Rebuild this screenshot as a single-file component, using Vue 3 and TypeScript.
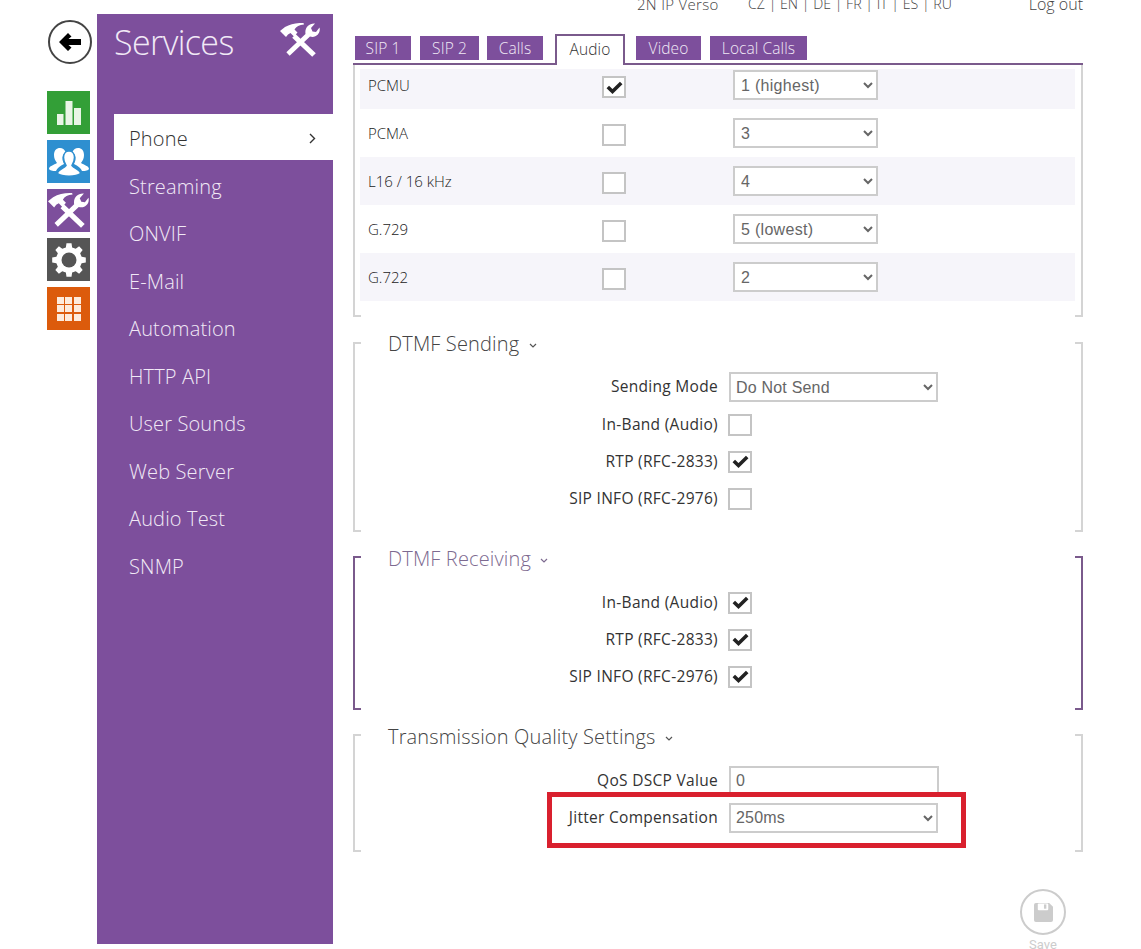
<script setup lang="ts">
const railTiles = ['green', 'blue', 'violet', 'dark', 'orange'] as const
const menu = ['Phone', 'Streaming', 'ONVIF', 'E-Mail', 'Automation', 'HTTP API', 'User Sounds', 'Web Server', 'Audio Test', 'SNMP']
const tabs = ['SIP 1', 'SIP 2', 'Calls', 'Audio', 'Video', 'Local Calls']
const priorities = ['1 (highest)', '2', '3', '4', '5 (lowest)']
const codecs = [
  { name: 'PCMU', on: true, pr: '1 (highest)' },
  { name: 'PCMA', on: false, pr: '3' },
  { name: 'L16 / 16 kHz', on: false, pr: '4' },
  { name: 'G.729', on: false, pr: '5 (lowest)' },
  { name: 'G.722', on: false, pr: '2' },
]
const sendChecks = [
  { label: 'In-Band (Audio)', on: false },
  { label: 'RTP (RFC-2833)', on: true },
  { label: 'SIP INFO (RFC-2976)', on: false },
]
const recvChecks = [
  { label: 'In-Band (Audio)', on: true },
  { label: 'RTP (RFC-2833)', on: true },
  { label: 'SIP INFO (RFC-2976)', on: true },
]
const hammerPath = 'M0 8 L5 4 Q13 -0.500 23.500 0 L24 1.500 Q17 2 14.500 6.500 L17.500 9.500 L14 13.500 L10.500 10 L8 11.500 L6 14 Z M12.200 14.800 L15.800 11.200 L35.800 30.200 L32.200 33.800 Z'
const wrenchPath = 'M35 0.500 L31 5 L32.500 8.500 L36 9 L39.500 4.500 C41 10 36 15.500 30 13.500 L9.650 32.740 L6.350 29.260 L25.500 11 C24.500 4.500 29 0 35 0.500 Z'

function gearPath(): string {
  const pts: string[] = []
  const teeth = 8
  for (let i = 0; i < teeth; i++) {
    const a = (i / teeth) * Math.PI * 2
    const step = Math.PI / teeth
    const at = (r: number, t: number) => `${(17 + r * Math.sin(t)).toFixed(2)} ${(17 - r * Math.cos(t)).toFixed(2)}`
    pts.push(`L${at(13, a - step * 0.62)}`, `L${at(17, a - step * 0.38)}`, `L${at(17, a + step * 0.38)}`, `L${at(13, a + step * 0.62)}`)
  }
  return 'M' + pts.join(' ').slice(1) + ' Z'
}
const gear = gearPath()
</script>

<template>
  <div class="page">
    <nav class="rail">
      <button class="back" type="button" aria-label="Back">
        <svg width="22" height="18" viewBox="0 0 22 18"><path d="M9 0 L12.500 3.500 L9.500 6 L22 6 L22 12 L9.500 12 L12.500 14.500 L9 18 L0 9 Z" fill="#000" /></svg>
      </button>
      <div class="tiles">
        <div v-for="t in railTiles" :key="t" class="tile" :class="t">
          <svg v-if="t === 'green'" width="24" height="24" viewBox="0 0 24 24" fill="#e9f5e6"><rect x="0" y="13" width="6.500" height="11" /><rect x="8.500" y="0" width="7" height="24" /><rect x="17" y="7" width="7" height="17" /></svg>
          <svg v-else-if="t === 'blue'" width="40" height="30" viewBox="0 0 40 30" fill="#fff">
            <path d="M0 22 C0 19 5 18 8 16 C6 13.500 5 11 5 8 C5 3.500 7.500 1 11 1 C13.500 1 15.500 2.500 16.500 5 C14 7 13 10 13.500 13 L15 17 C11 19 8 21 7 24 C3 24 1 23.500 0 22 Z" />
            <path d="M40 22 C40 19 35 18 32 16 C34 13.500 35 11 35 8 C35 3.500 32.500 1 29 1 C26.500 1 24.500 2.500 23.500 5 C26 7 27 10 26.500 13 L25 17 C29 19 32 21 33 24 C37 24 39 23.500 40 22 Z" />
            <path d="M8.500 26.500 C8.500 23 15 21.500 17 18.500 C15.500 16 14.500 13.500 14.500 10.500 C14.500 6.500 17 4 20 4 C23 4 25.500 6.500 25.500 10.500 C25.500 13.500 24.500 16 23 18.500 C25 21.500 31.500 23 31.500 26.500 C27 30 13 30 8.500 26.500 Z" />
          </svg>
          <svg v-else-if="t === 'violet'" width="41" height="35" viewBox="0 0 40 34" fill="#fff"><path :d="wrenchPath" /><path :d="hammerPath" /></svg>
          <svg v-else-if="t === 'dark'" width="34" height="34" viewBox="0 0 34 34">
            <path fill="#fff" :d="gear" />
            <circle cx="17" cy="17" r="7.500" fill="#555" />
          </svg>
          <div v-else class="grid-icon"><span v-for="n in 9" :key="n"></span></div>
        </div>
      </div>
    </nav>

    <aside class="side">
      <header class="side-head">
        <h1>Services</h1>
        <svg class="head-tools" width="40" height="34" viewBox="0 0 40 34" fill="#fff"><path :d="wrenchPath" /><path :d="hammerPath" /></svg>
      </header>
      <ul class="menu">
        <li v-for="(m, i) in menu" :key="m" :class="{ current: i === 0 }">
          <span>{{ m }}</span>
          <svg v-if="i === 0" width="7" height="11" viewBox="0 0 7 11"><path d="M1 1 L5.500 5.500 L1 10" fill="none" stroke="#333" stroke-width="1.400" /></svg>
        </li>
      </ul>
    </aside>

    <main class="main">
      <div class="topbar">
        <span class="device">2N IP Verso</span>
        <span class="langs">CZ | EN | DE | FR | IT | ES | RU</span>
        <span class="logout">Log out</span>
      </div>

      <div class="tabs">
        <span v-for="t in tabs" :key="t" class="tab" :class="{ active: t === 'Audio' }">{{ t }}</span>
      </div>

      <section class="sec first">
        <div v-for="c in codecs" :key="c.name" class="codec">
          <span class="codec-name">{{ c.name }}</span>
          <span class="box codec-box">
            <svg v-if="c.on" width="17" height="13" viewBox="0 0 17 13"><path d="M1.800 6 L6.500 10.500 L15.200 2" fill="none" stroke="#222" stroke-width="3.600" /></svg>
          </span>
          <select class="sel narrow">
            <option v-for="p in priorities" :key="p" :selected="p === c.pr">{{ p }}</option>
          </select>
        </div>
      </section>

      <section class="sec send">
        <h2>DTMF Sending <svg class="chev" width="8" height="5" viewBox="0 0 8 5"><path d="M1 1 L4 4 L7 1" fill="none" stroke="#555" stroke-width="1.200" /></svg></h2>
        <div class="row row-select">
          <label>Sending Mode</label>
          <select class="sel wide"><option>Do Not Send</option></select>
        </div>
        <div v-for="c in sendChecks" :key="c.label" class="row">
          <label>{{ c.label }}</label>
          <span class="box">
            <svg v-if="c.on" width="17" height="13" viewBox="0 0 17 13"><path d="M1.800 6 L6.500 10.500 L15.200 2" fill="none" stroke="#222" stroke-width="3.600" /></svg>
          </span>
        </div>
      </section>

      <section class="sec recv">
        <h2>DTMF Receiving <svg class="chev" width="8" height="5" viewBox="0 0 8 5"><path d="M1 1 L4 4 L7 1" fill="none" stroke="#7d6a90" stroke-width="1.200" /></svg></h2>
        <div v-for="c in recvChecks" :key="c.label" class="row">
          <label>{{ c.label }}</label>
          <span class="box">
            <svg v-if="c.on" width="17" height="13" viewBox="0 0 17 13"><path d="M1.800 6 L6.500 10.500 L15.200 2" fill="none" stroke="#222" stroke-width="3.600" /></svg>
          </span>
        </div>
      </section>

      <section class="sec qual">
        <h2>Transmission Quality Settings <svg class="chev" width="8" height="5" viewBox="0 0 8 5"><path d="M1 1 L4 4 L7 1" fill="none" stroke="#555" stroke-width="1.200" /></svg></h2>
        <div class="row">
          <label>QoS DSCP Value</label>
          <input class="inp" type="text" value="0" />
        </div>
        <div class="row jitter">
          <label>Jitter Compensation</label>
          <select class="sel wide"><option>250ms</option></select>
          <div class="redbox"></div>
        </div>
      </section>

      <div class="save">
        <span class="save-ring">
          <svg width="19" height="19" viewBox="0 0 20 20"><path fill="#ccc" d="M2 0 H16 L20 4 V18 A2 2 0 0 1 18 20 H2 A2 2 0 0 1 0 18 V2 A2 2 0 0 1 2 0 Z" /><rect x="4" y="0.500" width="11" height="7" rx="1" fill="#fff" /><rect x="10.500" y="1.500" width="2.500" height="4.500" fill="#ccc" /></svg>
        </span>
        <span class="save-label">Save</span>
      </div>
    </main>
  </div>
</template>

<style>
html, body { margin: 0; background: #fff; }
</style>

<style scoped>
.page {
  display: flex;
  width: 1141px;
  height: 949px;
  overflow: hidden;
  font-family: "Open Sans", "Noto Sans", sans-serif;
  color: #333;
}
.rail { width: 45px; margin-left: 47px; padding-top: 20px; flex: none; }
.back {
  display: flex; align-items: center; justify-content: center;
  width: 44px; height: 44px; margin-left: 1px; padding: 0;
  border: 2px solid #444; border-radius: 50%; background: #fff;
}
.tiles { display: flex; flex-direction: column; gap: 6px; margin-top: 27px; }
.tile { width: 43px; height: 43px; display: flex; align-items: center; justify-content: center; overflow: hidden; }
.green { background: #339f37; }
.blue { background: #2e8fd0; }
.blue svg path:last-child { stroke: #2e8fd0; stroke-width: 1.500; }
.violet { background: #7d4f9c; }
.dark { background: #555; }
.orange { background: #dc5b0c; }
.grid-icon { display: grid; grid-template-columns: repeat(3, 7px); grid-auto-rows: 7px; gap: 1.500px; }
.grid-icon span { background: #fdebdc; }

.side {
  flex: none; width: 236px; height: 930px; margin: 14px 0 0 5px;
  background: #7d4f9c; color: #f1e9f6;
}
.side-head { display: flex; align-items: center; justify-content: space-between; height: 56px; padding: 0 13px 0 17px; }
.side-head h1 { margin: 0; font-size: 34px; font-weight: 300; letter-spacing: -0.6px; line-height: 56px; }
.head-tools { margin-top: -4px; }
.menu { list-style: none; margin: 44px 0 0 17px; padding: 0; }
.menu li {
  display: flex; align-items: center; justify-content: space-between;
  height: 47.500px; padding: 2px 17px 0 15px; font-size: 20px; font-weight: 300;
  box-sizing: border-box; letter-spacing: 0.15px;
}
.menu li.current { height: 46px; margin-bottom: 1.500px; background: #fff; color: #333; }

.main { flex: none; width: 730px; margin-left: 20px; display: flex; flex-direction: column; }
.topbar { position: relative; height: 10px; font-size: 15px; line-height: 10px; font-weight: 300; color: #444; }
.topbar span { position: absolute; top: -1px; white-space: nowrap; }
.device { left: 284px; letter-spacing: 0.3px; }
.langs { left: 395px; font-size: 14.200px; }
.logout { right: 0; font-size: 16px; }

.tabs { display: flex; align-items: flex-end; height: 53px; padding-left: 2px; border-bottom: 2px solid #7a5a8c; box-sizing: content-box; }
.tab {
  height: 24px; line-height: 24px; margin: 0 9px 3px 0; text-align: center; box-sizing: border-box;
  background: #7d4f9c; color: #f1e9f6; font-size: 15.500px; font-weight: 300; white-space: nowrap; letter-spacing: 0.1px;
}
.tab:nth-child(1) { width: 56px; }
.tab:nth-child(2) { width: 59px; margin-right: 8px; }
.tab:nth-child(3) { width: 56px; margin-right: 12px; }
.tab:nth-child(5) { width: 65px; }
.tab:nth-child(6) { width: 97px; }
.tab.active {
  width: 70px; height: 31px; margin: 0 11px -2px 0; line-height: 27px; background: #fff; color: #333;
  border: 2px solid #7a5a8c; border-bottom: 0;
}

.sec { position: relative; }
.sec::before, .sec::after {
  content: ""; position: absolute; top: 0; bottom: 0; width: 6px;
  border: 2px solid #d4d4d4;
}
.sec::before { left: 0; border-right: 0; }
.sec::after { right: 0; border-left: 0; }
.first { height: 252px; padding: 4px 8px 0 7px; box-sizing: border-box; }
.first::before, .first::after { border-top: 0; }
.send { height: 190px; margin-top: 25px; }
.recv { height: 154px; margin-top: 24px; }
.qual { height: 118px; margin-top: 24px; }
.recv::before, .recv::after { border-color: #7a5a8c; }

.codec { display: flex; align-items: center; height: 48px; font-size: 15px; font-weight: 300; }
.codec:nth-child(odd) { background: #f6f5fa; }
.codec:first-child { height: 40px; padding-bottom: 8px; box-sizing: border-box; }
.codec-name { width: 242px; padding-left: 8px; box-sizing: border-box; color: #222; }
.codec-box { margin: 4px 107px 0 0; }
.box {
  flex: none; display: flex; align-items: center; justify-content: center;
  width: 24px; height: 22px; border: 2px solid #c4c4c4; background: #fff; box-sizing: border-box;
}
.sel {
  font-family: "Liberation Sans", Arial, sans-serif; font-size: 16px; color: #666; letter-spacing: 0.2px;
  border: 2px solid #ccc; background: #fff; height: 30px; box-sizing: border-box; border-radius: 0; padding: 0 1px;
}
.narrow { width: 145px; padding: 0 2px; letter-spacing: 0.3px; }
.wide { width: 209px; margin-left: 1px; }

h2 {
  margin: -12px 0 11px 35px; font-size: 20px; line-height: 28px; font-weight: 300; color: #444; position: relative; background: #fff;
  width: max-content; letter-spacing: 0.15px;
}
.send h2 { margin-bottom: 10px; }
.recv h2, .qual h2 { margin-top: -11px; }
.recv h2 { color: #7d6a90; }
.chev { vertical-align: middle; margin-left: 4px; }

.row { position: relative; display: flex; align-items: center; height: 37px; }
.row-select { height: 38px; }
.row label { width: 365px; margin-right: 10px; text-align: right; font-size: 15.500px; font-weight: 400; color: #333; letter-spacing: 0.3px; white-space: nowrap; margin-top: -2px; }
.inp {
  width: 210px; height: 30px; margin-left: 1px; box-sizing: border-box; border: 2px solid #ccc; padding: 0 5px;
  font-family: "Liberation Sans", Arial, sans-serif; font-size: 16px; color: #666; letter-spacing: 0.2px; outline: 0;
}
.redbox { position: absolute; left: 194px; top: -7px; width: 419px; height: 56px; border: 5px solid #d9202e; box-sizing: border-box; pointer-events: none; }

.save { position: absolute; left: 1015px; top: 889px; width: 56px; display: flex; flex-direction: column; align-items: center; }
.save-ring { width: 46px; height: 46px; box-sizing: border-box; border: 2px solid #ccc; border-radius: 50%; display: flex; align-items: center; justify-content: center; background: #fff; }
.save-label { margin-top: 2px; font-family: Roboto, sans-serif; font-size: 13px; line-height: 16px; color: #ccc; }
</style>
